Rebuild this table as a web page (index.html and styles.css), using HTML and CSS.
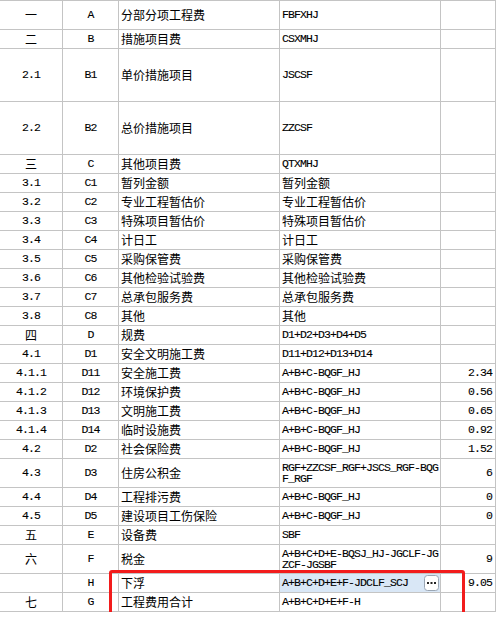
FILE: index.html
```html
<!DOCTYPE html>
<html>
<head>
<meta charset="utf-8">
<link rel="stylesheet" href="styles.css">
</head>
<body>
<div class="sheet">
  <div class="row h29"><div class="c c1 zh">一</div><div class="c c2 en">A</div><div class="c c3 zh">分部分项工程费</div><div class="c c4 en">FBFXHJ</div><div class="c c5 en"></div></div>
  <div class="row"><div class="c c1 zh">二</div><div class="c c2 en">B</div><div class="c c3 zh">措施项目费</div><div class="c c4 en">CSXMHJ</div><div class="c c5 en"></div></div>
  <div class="row h53"><div class="c c1 en">2.1</div><div class="c c2 en">B1</div><div class="c c3 zh">单价措施项目</div><div class="c c4 en">JSCSF</div><div class="c c5 en"></div></div>
  <div class="row h53"><div class="c c1 en">2.2</div><div class="c c2 en">B2</div><div class="c c3 zh">总价措施项目</div><div class="c c4 en">ZZCSF</div><div class="c c5 en"></div></div>
  <div class="row"><div class="c c1 zh">三</div><div class="c c2 en">C</div><div class="c c3 zh">其他项目费</div><div class="c c4 en">QTXMHJ</div><div class="c c5 en"></div></div>
  <div class="row"><div class="c c1 en">3.1</div><div class="c c2 en">C1</div><div class="c c3 zh">暂列金额</div><div class="c c4 zh">暂列金额</div><div class="c c5 en"></div></div>
  <div class="row"><div class="c c1 en">3.2</div><div class="c c2 en">C2</div><div class="c c3 zh">专业工程暂估价</div><div class="c c4 zh">专业工程暂估价</div><div class="c c5 en"></div></div>
  <div class="row"><div class="c c1 en">3.3</div><div class="c c2 en">C3</div><div class="c c3 zh">特殊项目暂估价</div><div class="c c4 zh">特殊项目暂估价</div><div class="c c5 en"></div></div>
  <div class="row"><div class="c c1 en">3.4</div><div class="c c2 en">C4</div><div class="c c3 zh">计日工</div><div class="c c4 zh">计日工</div><div class="c c5 en"></div></div>
  <div class="row"><div class="c c1 en">3.5</div><div class="c c2 en">C5</div><div class="c c3 zh">采购保管费</div><div class="c c4 zh">采购保管费</div><div class="c c5 en"></div></div>
  <div class="row"><div class="c c1 en">3.6</div><div class="c c2 en">C6</div><div class="c c3 zh">其他检验试验费</div><div class="c c4 zh">其他检验试验费</div><div class="c c5 en"></div></div>
  <div class="row"><div class="c c1 en">3.7</div><div class="c c2 en">C7</div><div class="c c3 zh">总承包服务费</div><div class="c c4 zh">总承包服务费</div><div class="c c5 en"></div></div>
  <div class="row"><div class="c c1 en">3.8</div><div class="c c2 en">C8</div><div class="c c3 zh">其他</div><div class="c c4 zh">其他</div><div class="c c5 en"></div></div>
  <div class="row"><div class="c c1 zh">四</div><div class="c c2 en">D</div><div class="c c3 zh">规费</div><div class="c c4 en">D1+D2+D3+D4+D5</div><div class="c c5 en"></div></div>
  <div class="row"><div class="c c1 en">4.1</div><div class="c c2 en">D1</div><div class="c c3 zh">安全文明施工费</div><div class="c c4 en">D11+D12+D13+D14</div><div class="c c5 en"></div></div>
  <div class="row"><div class="c c1 en">4.1.1</div><div class="c c2 en">D11</div><div class="c c3 zh">安全施工费</div><div class="c c4 en">A+B+C-BQGF_HJ</div><div class="c c5 en">2.34</div></div>
  <div class="row"><div class="c c1 en">4.1.2</div><div class="c c2 en">D12</div><div class="c c3 zh">环境保护费</div><div class="c c4 en">A+B+C-BQGF_HJ</div><div class="c c5 en">0.56</div></div>
  <div class="row"><div class="c c1 en">4.1.3</div><div class="c c2 en">D13</div><div class="c c3 zh">文明施工费</div><div class="c c4 en">A+B+C-BQGF_HJ</div><div class="c c5 en">0.65</div></div>
  <div class="row"><div class="c c1 en">4.1.4</div><div class="c c2 en">D14</div><div class="c c3 zh">临时设施费</div><div class="c c4 en">A+B+C-BQGF_HJ</div><div class="c c5 en">0.92</div></div>
  <div class="row"><div class="c c1 en">4.2</div><div class="c c2 en">D2</div><div class="c c3 zh">社会保险费</div><div class="c c4 en">A+B+C-BQGF_HJ</div><div class="c c5 en">1.52</div></div>
  <div class="row h29"><div class="c c1 en">4.3</div><div class="c c2 en">D3</div><div class="c c3 zh">住房公积金</div><div class="c c4 en">RGF+ZZCSF_RGF+JSCS_RGF-BQG<br>F_RGF</div><div class="c c5 en">6</div></div>
  <div class="row"><div class="c c1 en">4.4</div><div class="c c2 en">D4</div><div class="c c3 zh">工程排污费</div><div class="c c4 en">A+B+C-BQGF_HJ</div><div class="c c5 en">0</div></div>
  <div class="row"><div class="c c1 en">4.5</div><div class="c c2 en">D5</div><div class="c c3 zh">建设项目工伤保险</div><div class="c c4 en">A+B+C-BQGF_HJ</div><div class="c c5 en">0</div></div>
  <div class="row"><div class="c c1 zh">五</div><div class="c c2 en">E</div><div class="c c3 zh">设备费</div><div class="c c4 en">SBF</div><div class="c c5 en"></div></div>
  <div class="row h29"><div class="c c1 zh">六</div><div class="c c2 en">F</div><div class="c c3 zh">税金</div><div class="c c4 en">A+B+C+D+E-BQSJ_HJ-JGCLF-JG<br>ZCF-JGSBF</div><div class="c c5 en">9</div></div>
  <div class="row"><div class="c c1 zh"></div><div class="c c2 en">H</div><div class="c c3 zh">下浮</div><div class="c c4 en active"><span class="txt">A+B+C+D+E+F-JDCLF_SCJ</span><span class="more"><svg width="15" height="16" viewBox="0 0 15 16"><rect x="0.5" y="0.5" width="14" height="15" rx="3" fill="#fff" stroke="#9aa6b4"/><rect x="3" y="7" width="2" height="2" fill="#222"/><rect x="6.5" y="7" width="2" height="2" fill="#222"/><rect x="10" y="7" width="2" height="2" fill="#222"/></svg></span></div><div class="c c5 en">9.05</div></div>
  <div class="row"><div class="c c1 zh">七</div><div class="c c2 en">G</div><div class="c c3 zh">工程费用合计</div><div class="c c4 en">A+B+C+D+E+F-H</div><div class="c c5 en"></div></div>
  <div class="highlight"></div>
</div>
</body>
</html>
```

FILE: styles.css
```css
html, body {
  margin: 0;
  padding: 0;
  background: #ffffff;
}
.sheet {
  position: relative;
  width: 496px;
  border-top: 1px solid #c4c4c4;
}
.row {
  display: grid;
  grid-template-columns: 63px 56px 161px 161px 55px;
  height: 19px;
}
.row.h29 { height: 29px; }
.row.h53 { height: 53px; }
.c {
  box-sizing: border-box;
  border-right: 1px solid #c4c4c4;
  border-bottom: 1px solid #c4c4c4;
  display: flex;
  align-items: center;
  overflow: hidden;
  white-space: nowrap;
  color: #000;
  line-height: 12px;
}
.zh {
  font-family: "Noto Sans CJK SC", "Noto Sans", sans-serif;
  font-size: 12px;
}
.en {
  font-family: "Liberation Mono", "Noto Sans CJK SC", monospace;
  font-size: 11.5px;
  letter-spacing: -0.9px;
  line-height: 11.5px;
  -webkit-text-stroke: 0.1px #000;
}
.c1, .c2 { justify-content: center; }
.c3, .c4 { padding-left: 2px; }
.c5 { justify-content: flex-end; padding-right: 3px; }
.c4.active {
  background: #d9e7f6;
  justify-content: space-between;
  padding-right: 1px;
}
.more {
  display: flex;
  letter-spacing: 0;
}
.highlight {
  position: absolute;
  left: 109px;
  top: 569px;
  width: 356px;
  height: 45px;
  box-sizing: border-box;
  border: 3px solid #f21c1c;
  border-radius: 3px;
  pointer-events: none;
}
```
